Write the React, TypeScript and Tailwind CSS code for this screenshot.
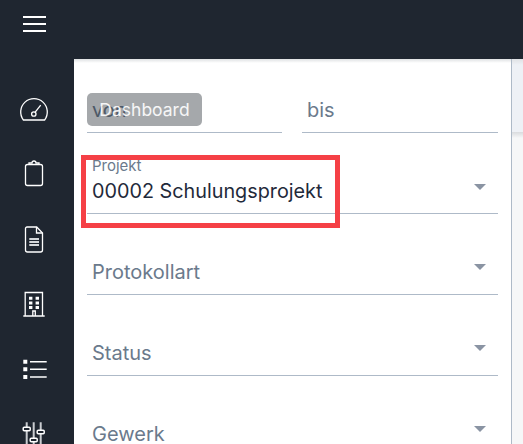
import { ReactNode } from "react";

const font = { fontFamily: "Inter, sans-serif" };

function Caret() {
  return (
    <svg width="12" height="6" viewBox="0 0 12 6" className="shrink-0 block">
      <path d="M0 0h12L6 6z" fill="#8a94a3" />
    </svg>
  );
}

function SelectField({ label }: { label: string }) {
  return (
    <div className="h-[81px] flex items-end">
      <div className="w-full h-[45px] border-b border-[#aebac8] flex items-center justify-between pr-[12px] pl-[5px]">
        <span className="text-[20px] text-[#6b7a8c]">{label}</span>
        <span className="-mt-[10px]"><Caret /></span>
      </div>
    </div>
  );
}

function SideIcon({ children }: { children: ReactNode }) {
  return (
    <div className="h-[65px] shrink-0 flex items-center justify-center">
      <svg width="34" height="34" viewBox="0 0 34 34" fill="none" stroke="#fff" strokeWidth="1.3">
        {children}
      </svg>
    </div>
  );
}

export default function App() {
  return (
    <div className="w-[523px] h-[444px] overflow-hidden bg-[#1f2630] flex flex-col" style={font}>
      {/* Top bar */}
      <div className="h-[59px] shrink-0 pt-[16px]">
        <div className="w-[68px] flex flex-col items-center gap-[5px]">
          <div className="w-[23px] h-[2px] bg-white" />
          <div className="w-[23px] h-[2px] bg-white" />
          <div className="w-[23px] h-[2px] bg-white" />
        </div>
      </div>

      <div className="flex flex-1 min-h-0">
        {/* Sidebar */}
        <div className="w-[74px] shrink-0 pt-[17px] pr-[6px] flex flex-col">
          <SideIcon>
            <path d="M6.4 28A13.3 13.3 0 1 1 27.6 28Z" strokeLinejoin="round" />
            <circle cx="16.8" cy="22" r="2.2" />
            <path d="M18.2 20.2l5.5-7" />
          </SideIcon>
          <SideIcon>
            <rect x="8.5" y="7.5" width="17" height="21" rx="2" />
            <path d="M12 8V6h3a2 2 0 0 1 4 0h3v2" />
          </SideIcon>
          <SideIcon>
            <path d="M10 5h9.7l5.8 6v17a2 2 0 0 1-2 2h-13a2 2 0 0 1-2-2V6.5A1.5 1.5 0 0 1 10 5z" />
            <path d="M19.5 5v6h6" />
            <path d="M12.3 17H22M12.3 20H22M12.3 23H22" strokeWidth="1.8" stroke="#d5d8db" />
          </SideIcon>
          <SideIcon>
            <path d="M8.2 29V5.5h17.3V29M6.3 29h21.4M15.8 29v-5h2.5v5" />
            <path d="M12 11.3h3.4M18.6 11.3H22M12 16h3.4M18.6 16H22M12 20.5h3.4M18.6 20.5H22" strokeWidth="3" />
          </SideIcon>
          <SideIcon>
            <path d="M13 9.7h16.7M13 17.3h16.7M13 25h16.7" strokeWidth="1.5" />
            <path d="M6.3 7.7h4v4h-4zM6.3 15.3h4v4h-4zM6.3 23h4v4h-4z" fill="#fff" stroke="none" />
          </SideIcon>
          <SideIcon>
            <path d="M9.7 5.3V34M16.7 5.3V34M23.7 5.3V34" stroke="#c9ccd0" strokeWidth="2" />
            <rect x="6.2" y="10.2" width="7" height="3.6" rx="1" fill="#1f2630" strokeWidth="1.5" />
            <rect x="13.2" y="21.2" width="7" height="3.6" rx="1" fill="#1f2630" strokeWidth="1.5" />
            <rect x="20.2" y="13.2" width="7" height="3.6" rx="1" fill="#1f2630" strokeWidth="1.5" />
          </SideIcon>
        </div>

        {/* Panel */}
        <div className="flex-1 min-w-0 flex bg-white">
          <div className="relative w-[438px] shrink-0 border-r border-[#aebac8] px-[13px]">
            <div className="absolute left-0 right-0 top-0 h-[4px] bg-gradient-to-b from-[#dfe1e3] to-white" />
            <div className="flex gap-[20px] h-[74px] items-end">
              <div className="relative w-[195px] h-[45px] border-b border-[#aebac8] pl-[5px] flex items-center">
                <span className="text-[20px] text-[#6b7a8c]">von</span>
                <div className="absolute left-0 top-[5px] w-[115px] h-[33px] pt-[2px] rounded-[5px] bg-[#1f262c]/40 text-white/90 text-[17.5px] flex items-center justify-center">
                  Dashboard
                </div>
              </div>
              <div className="w-[196px] h-[45px] border-b border-[#aebac8] pl-[5px] flex items-center">
                <span className="text-[20px] text-[#6b7a8c]">bis</span>
              </div>
            </div>

            {/* Highlighted field */}
            <div className="relative h-[81px] flex items-end">
              <div className="w-full h-[58px] border-b border-[#aebac8] pl-[5px] pr-[12px] flex items-end justify-between pb-[8px]">
                <div className="flex flex-col">
                  <span className="text-[15px] leading-[16px] mb-[3px] text-[#6b7a8c]">Projekt</span>
                  <span className="text-[19.8px] leading-[28px] text-[#1f2a3a]">00002 Schulungsprojekt</span>
                </div>
                <span className="mb-[15px]"><Caret /></span>
              </div>
              <div className="absolute left-[-6px] top-[22px] w-[259px] h-[73px] border-[5px] border-[#f54046]" />
            </div>

            <SelectField label="Protokollart" />
            <SelectField label="Status" />
            <SelectField label="Gewerk" />
          </div>

          {/* Edge of the page behind the panel */}
          <div className="flex-1 flex flex-col">
            <div className="h-[73px] shrink-0 bg-gradient-to-b from-[#dfe1e4] to-[#eef1f6] to-[8%]" />
            <div className="h-[6px] shrink-0 bg-gradient-to-b from-[#d9dbde] to-[#f6f7f8]" />
            <div className="flex-1 bg-[#f6f7f8]" />
          </div>
        </div>
      </div>
    </div>
  );
}
